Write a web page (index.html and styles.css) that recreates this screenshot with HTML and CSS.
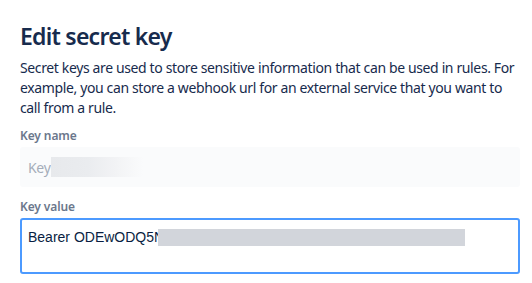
FILE: index.html
```html
<!DOCTYPE html>
<html lang="en">
<head>
<meta charset="utf-8">
<title>Edit secret key</title>
<link rel="stylesheet" href="styles.css">
</head>
<body>
<main class="dialog">
  <h1 class="title">Edit secret key</h1>
  <p class="intro">Secret keys are used to store sensitive information that can be used in rules. For example, you can store a webhook url for an external service that you want to call from a rule.</p>
  <div class="field">
    <label class="label">Key name</label>
    <div class="input input-disabled"><span class="placeholder">Key</span><span class="blur"></span></div>
  </div>
  <div class="field">
    <label class="label">Key value</label>
    <div class="textarea"><span class="value">Bearer ODEwODQ5N</span><span class="redact"></span></div>
  </div>
</main>
</body>
</html>
```
FILE: styles.css
```css
html, body { margin: 0; padding: 0; background: #ffffff; }
body { font-family: "Noto Sans", "Open Sans", sans-serif; color: #172B4D; }
.dialog { width: 500px; padding: 20px 0 0 20px; }
.title { margin: 0; font-size: 23px; line-height: 32px; font-weight: 600; color: #172B4D; letter-spacing: -0.75px; }
.intro { margin: 6px 0 0; font-size: 14px; line-height: 20px; color: #172B4D; letter-spacing: -0.37px; }
.field { margin-top: 10px; display: flex; flex-direction: column; }
.field + .field { margin-top: 12px; }
.label { font-size: 12px; line-height: 16px; font-weight: 600; color: #6B778C; margin-bottom: 3px; letter-spacing: -0.1px; }
.input { box-sizing: border-box; height: 40px; border-radius: 3px; background: #FAFBFC; display: flex; align-items: center; padding-left: 8px; }
.placeholder { font-size: 14px; color: #A5ADBA; letter-spacing: -0.3px; }
.blur { display: inline-block; width: 92px; height: 20px; background: linear-gradient(to right, #e7e9ec 0%, #eaecef 40%, #f2f3f5 70%, #fafbfc 100%); }
.textarea { box-sizing: border-box; height: 56px; border: 2px solid #4C9AFF; border-radius: 3px; padding: 9px 6px; display: flex; align-items: flex-start; }
.value { font-family: "Liberation Sans", Arial, sans-serif; font-size: 14px; line-height: 17px; color: #091E42; white-space: nowrap; }
.redact { display: inline-block; width: 307px; height: 17px; background: #D2D5DB; margin-left: -6px; }
```
